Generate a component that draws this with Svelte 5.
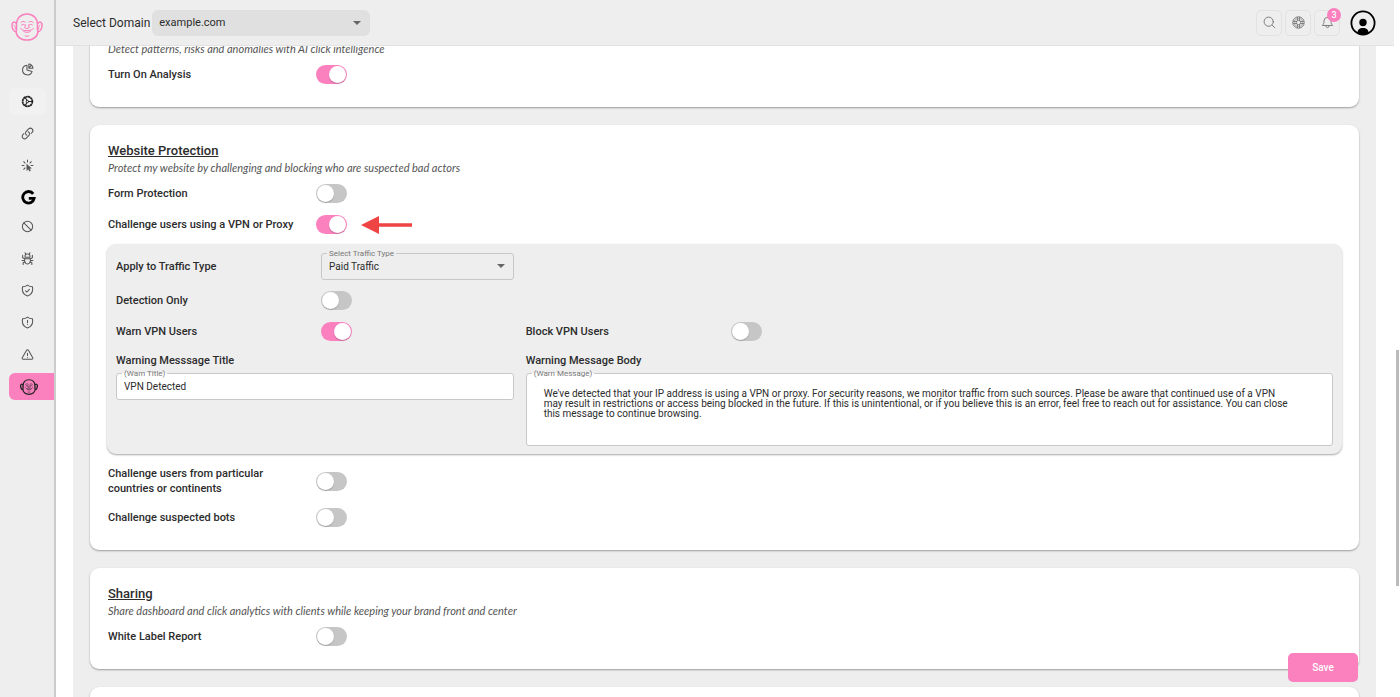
<script lang="ts">
	let domain = $state('example.com');
	let trafficType = $state('Paid Traffic');
	let warnTitle = $state('VPN Detected');
	let warnMessage = $state(
		"We've detected that your IP address is using a VPN or proxy. For security reasons, we monitor traffic from such sources. Please be aware that continued use of a VPN may result in restrictions or access being blocked in the future. If this is unintentional, or if you believe this is an error, feel free to reach out for assistance. You can close this message to continue browsing."
	);

	let settings = $state({
		analysis: true,
		form: false,
		vpn: true,
		detection: false,
		warn: true,
		block: false,
		countries: false,
		bots: false,
		whiteLabel: false
	});

	const navItems = [
		{ id: 'reports', label: 'Reports' },
		{ id: 'settings', label: 'Settings' },
		{ id: 'links', label: 'Links' },
		{ id: 'clicks', label: 'Clicks' },
		{ id: 'google', label: 'Google' },
		{ id: 'blocked', label: 'Blocked' },
		{ id: 'bots', label: 'Bots' },
		{ id: 'protected', label: 'Protected' },
		{ id: 'risks', label: 'Risks' },
		{ id: 'alerts', label: 'Alerts' },
		{ id: 'monk', label: 'Protection settings' }
	];
</script>

{#snippet toggle(key, label)}
	<label for={key}>{label}</label>
	<input id={key} class="toggle" type="checkbox" bind:checked={settings[key]} />
{/snippet}

{#snippet monk()}
	<svg viewBox="0 0 32 28" fill="none" stroke="currentColor" stroke-width="1.5" stroke-linecap="round" stroke-linejoin="round">
		<path d="M5.500 12C5.500 5 10 1 16 1s10.500 4 10.500 11c0 2-.5 3 .2 5.500C27.500 23 22.500 27 16 27S4.500 23 5.300 17.500c.6-2.500.2-3.500.2-5.500z" />
		<path d="M5.300 10.500C3 7.500.5 9.500 1 13c.4 3 1.500 5.500 4 5.800M26.700 10.500c2.300-3 4.800-1 4.300 2.500-.4 3-1.500 5.500-4 5.800" />
		<path d="M3 12c1 .5 1.500 2 1.300 4M29 12c-1 .5-1.500 2-1.300 4" stroke-width="1" />
		<path d="M10 9.200c1.300-1 3-1 4.300-.2M22 9.200c-1.300-1-3-1-4.300-.2M10.500 12c1-.8 2.500-.8 3.500 0M21.500 12c-1-.8-2.500-.8-3.500 0M14.500 12l-.8 2.700c.8 1 3.800 1 4.600 0l-.8-2.700M9.500 15.500c1.500 3 11.500 3 13 0M12.500 18.300c2 1.500 5 1.500 7 0M14 22.800c1.200.8 2.800.8 4 0" stroke-width="1" />
	</svg>
{/snippet}

{#snippet navIcon(id)}
	{#if id === 'monk'}
		{@render monk()}
	{:else if id === 'google'}
		<svg class="g" viewBox="0 0 24 24" fill="none" stroke="currentColor" stroke-width="4.500">
			<path d="M19.500 6.300A9.200 9.200 0 1 0 21 13.500H12.500" />
		</svg>
	{:else}
		<svg viewBox="0 0 24 24" fill="none" stroke="currentColor" stroke-width="1.900" stroke-linecap="round" stroke-linejoin="round">
			{#if id === 'reports'}
				<path d="M11 4a9 9 0 1 0 9.500 11.500L11 13z" />
				<path d="M14.500 2v7.500H22A7.500 7.500 0 0 0 14.500 2zM14.500 9.500L19 4.500" />
			{:else if id === 'settings'}
				<circle cx="12" cy="12" r="9" stroke-width="3.200" stroke-dasharray="4.200 .51" stroke-linecap="butt" />
				<circle cx="12" cy="12" r="2.200" stroke-width="1.800" />
				<path d="M14.500 12H20M10.700 9.800L8 5M10.700 14.200L8 19" stroke-width="2" />
			{:else if id === 'links'}
				<path d="M13.200 8.700a4.500 4.500 0 0 1 1.200 7.200l-4.500 4.500a4.500 4.500 0 0 1-6.400-6.400l1.800-1.700M10.800 15.300a4.500 4.500 0 0 1-1.200-7.200l4.500-4.500a4.500 4.500 0 0 1 6.400 6.400l-1.800 1.700" />
			{:else if id === 'clicks'}
				<path d="M12 2v3.500M5 5l2.500 2.500M19 5l-2.500 2.500M2 12h3.500M18.500 12H22M5 19l2.500-2.500" />
				<path d="M11 10l8 7-3.500.5 2 4-1.800.9-2-4-2.700 2.300z" fill="currentColor" stroke-width="1" />
			{:else if id === 'blocked'}
				<circle cx="12" cy="12" r="9.500" />
				<path d="M5.300 5.300l13.400 13.400" />
			{:else if id === 'bots'}
				<path d="M7.500 9.500V7a4.500 3.500 0 0 1 9 0v2.500zM9 4L7.500 1.500M15 4l1.500-2.500" />
				<path d="M7 12.500h10c1.500 5.500-1 9.500-5 9.500s-6.500-4-5-9.500z" />
				<path d="M7 12.500L3 10.500V6M17 12.500l4-2V6M6.500 15.500H2M17.500 15.500H22M7.500 18.500L4 19.500V23M16.500 18.500l3.500 1V23" />
			{:else if id === 'protected' || id === 'risks'}
				<path d="M12 2c2.500 2 5.500 3 9 3 1.500 7-.5 14-9 17C3.500 19 1.500 12 3 5c3.500 0 6.500-1 9-3z" />
				{#if id === 'protected'}
					<path d="M8.500 12.500l2.500 2.300 4.500-5" />
				{:else}
					<path d="M12 8v4.500M12 15.500v.3" />
				{/if}
			{:else if id === 'alerts'}
				<path d="M10.300 4.200a2 2 0 0 1 3.400 0l8 13.600a2 2 0 0 1-1.700 3H4a2 2 0 0 1-1.700-3zM12 9.500v4.500M12 17v.2" />
			{/if}
		</svg>
	{/if}
{/snippet}

<div class="app">
	<aside>
		<a class="logo" href="#home" aria-label="Home">{@render monk()}</a>
		<nav>
			{#each navItems as item}
				<a class="nav-item {item.id}" href="#{item.id}" aria-label={item.label}>
					{@render navIcon(item.id)}
				</a>
			{/each}
		</nav>
	</aside>

	<div class="main">
		<header>
			<label for="domain">Select Domain</label>
			<div class="select-wrap domain">
				<select id="domain" bind:value={domain}>
					<option>example.com</option>
				</select>
				<svg class="caret" viewBox="0 0 8 4"><path d="M0 0h8L4 4z" fill="currentColor" /></svg>
			</div>
			<div class="actions">
				<button aria-label="Search">
					<svg viewBox="0 0 24 24" fill="none" stroke="currentColor" stroke-width="1.700" stroke-linecap="round">
						<circle cx="10.500" cy="10.500" r="8.500" />
						<path d="M17 17l5 5" />
					</svg>
				</button>
				<button aria-label="Help">
					<svg viewBox="0 0 24 24" fill="none" stroke="currentColor" stroke-width="1.800">
						<circle cx="12" cy="12" r="10.500" />
						<circle cx="12" cy="12" r="4" />
						<path d="M10 2v6.500M14 2v6.500M10 15.500V22M14 15.500V22M2 10h6.500M2 14h6.500M15.500 10H22M15.500 14H22" />
						<circle cx="12" cy="12" r="7.500" stroke-width="1" />
					</svg>
				</button>
				<button aria-label="Notifications">
					<svg viewBox="0 0 24 24" fill="none" stroke="currentColor" stroke-width="1.700" stroke-linecap="round" stroke-linejoin="round">
						<path d="M12 2.500a6.500 6.500 0 0 0-6.500 6.500c0 5-1 6.500-3 8.500h19c-2-2-3-3.500-3-8.500A6.500 6.500 0 0 0 12 2.500zM9 18a3 3.500 0 0 0 6 0" />
					</svg>
					<span class="badge">3</span>
				</button>
				<button class="avatar" aria-label="Account">
					<svg viewBox="0 0 26 26">
						<circle cx="13" cy="13" r="11.600" fill="none" stroke="#000" stroke-width="1.800" />
						<circle cx="13" cy="12.500" r="3.700" />
						<path d="M7.500 23c0-3.500 2-5 5.500-5s5.500 1.500 5.500 5c-3.500 2-7.500 2-11 0z" />
					</svg>
				</button>
			</div>
		</header>

		<main>
			<div class="page">
				<section class="card scrolled">
					<p>Detect patterns, risks and anomalies with AI click intelligence</p>
					<div class="row">{@render toggle('analysis', 'Turn On Analysis')}</div>
				</section>

				<section class="card">
					<h2>Website Protection</h2>
					<p>Protect my website by challenging and blocking who are suspected bad actors</p>
					<div class="row">{@render toggle('form', 'Form Protection')}</div>
					<div class="row">
						{@render toggle('vpn', 'Challenge users using a VPN or Proxy')}
						<svg class="arrow" viewBox="0 0 51 18">
							<path d="M0 9L18 0v7.200h33v3.600H18V18z" fill="#ee4444" />
						</svg>
					</div>

					<div class="panel">
						<div class="row traffic">
							<label for="traffic">Apply to Traffic Type</label>
							<div class="field select-wrap">
								<span class="legend">Select Traffic Type</span>
								<select id="traffic" bind:value={trafficType}>
									<option>Paid Traffic</option>
								</select>
								<svg class="caret" viewBox="0 0 8 4"><path d="M0 0h8L4 4z" fill="currentColor" /></svg>
							</div>
						</div>
						<div class="row full">{@render toggle('detection', 'Detection Only')}</div>
						<div class="row">{@render toggle('warn', 'Warn VPN Users')}</div>
						<div class="row wide">{@render toggle('block', 'Block VPN Users')}</div>
						<div class="message">
							<label for="warn-title">Warning Messsage Title</label>
							<div class="field">
								<span class="legend white">(Warn Title)</span>
								<input id="warn-title" type="text" bind:value={warnTitle} />
							</div>
						</div>
						<div class="message wide">
							<label for="warn-message">Warning Message Body</label>
							<div class="field">
								<span class="legend white">(Warn Message)</span>
								<textarea id="warn-message" bind:value={warnMessage}></textarea>
							</div>
						</div>
					</div>

					<div class="row tall">
						{@render toggle('countries', 'Challenge users from particular countries or continents')}
					</div>
					<div class="row">{@render toggle('bots', 'Challenge suspected bots')}</div>
				</section>

				<section class="card">
					<h2>Sharing</h2>
					<p>Share dashboard and click analytics with clients while keeping your brand front and center</p>
					<div class="row">{@render toggle('whiteLabel', 'White Label Report')}</div>
				</section>

				<section class="card next"></section>
			</div>
		</main>
		<div class="scrollbar"></div>
		<button class="save">Save</button>
	</div>
</div>

<style>
	:global(body) {
		background: #fff;
	}

	.app {
		display: flex;
		height: 100vh;
		overflow: hidden;
		font-family: Roboto, 'Liberation Sans', sans-serif;
		font-size: 11px;
		color: #2c2c2c;
	}

	.app :global(*) {
		box-sizing: border-box;
	}

	button,
	input,
	select,
	textarea {
		font: inherit;
		color: inherit;
		margin: 0;
	}

	svg {
		display: block;
	}

	aside {
		flex: none;
		width: 56px;
		background: #eee;
		border-right: 2px solid #ccc;
	}

	.logo {
		display: flex;
		justify-content: center;
		padding-top: 13px;
		height: 56px;
		color: #fa80be;
	}

	.logo svg {
		width: 32px;
		height: 28px;
	}

	nav {
		display: flex;
		flex-direction: column;
		gap: 5px;
	}

	.nav-item {
		display: flex;
		align-items: center;
		justify-content: center;
		height: 27px;
		margin: 0 8px 0 9px;
		border-radius: 6px;
		color: #555;
	}

	.nav-item svg {
		width: 13px;
		height: 13px;
	}

	.nav-item.settings {
		background: #f1f1f1;
		color: #222;
	}

	.nav-item.google {
		height: 24px;
		padding: 2px 0 0 2px;
		color: #000;
	}

	.nav-item svg.g {
		width: 15px;
		height: 15px;
	}

	.nav-item.monk {
		margin-right: 0;
		padding-right: 6px;
		border-radius: 6px 0 0 6px;
		background: #fa80be;
		color: #222;
	}

	.nav-item.monk svg {
		width: 18px;
		height: 16px;
		stroke-width: 2;
	}

	.main {
		position: relative;
		flex: 1;
		min-width: 0;
		display: flex;
		flex-direction: column;
	}

	header {
		flex: none;
		display: flex;
		align-items: center;
		gap: 2px;
		height: 46px;
		margin-right: 6px;
		padding: 0 18px 0 17px;
		background: #eee;
		border-bottom: 1px solid #e2e2e2;
	}

	header label {
		font-size: 12px;
	}

	.select-wrap {
		position: relative;
	}

	.domain {
		width: 218px;
	}

	select {
		display: block;
		width: 100%;
		height: 26px;
		padding: 0 7px;
		border: 0;
		border-radius: 6px;
		background: #e0e0e0;
		appearance: none;
		font-size: 10px;
	}

	.domain select {
		font-size: 11px;
		line-height: 16px;
	}

	.caret {
		position: absolute;
		top: 11px;
		right: 9px;
		width: 8px;
		height: 4px;
		color: #666;
		pointer-events: none;
	}

	.actions {
		display: flex;
		align-items: center;
		gap: 3px;
		margin-left: auto;
	}

	.actions button {
		position: relative;
		display: flex;
		align-items: center;
		justify-content: center;
		width: 26px;
		height: 26px;
		padding: 0;
		border: 1px solid #e2e2e2;
		border-radius: 5px;
		background: none;
		color: #777;
	}

	.actions button svg {
		width: 13px;
		height: 13px;
	}

	.actions .avatar {
		margin-left: 7px;
		border: 0;
		color: #000;
	}

	.actions .avatar svg {
		width: 26px;
		height: 26px;
	}

	.badge {
		position: absolute;
		top: -3px;
		right: -2px;
		width: 14px;
		height: 14px;
		border-radius: 50%;
		background: #fa80be;
		color: #fff;
		font-size: 9px;
		font-weight: 500;
		line-height: 14px;
		text-align: center;
	}

	main {
		flex: 1;
		min-height: 0;
		overflow: hidden;
		padding: 0 24px 0 17px;
	}

	.page {
		display: flex;
		flex-direction: column;
		gap: 18px;
		min-height: 100%;
		padding: 0 17px;
		background: #eee;
	}

	.card {
		padding: 18px 17px 17px;
		border-radius: 9px;
		background: #fff;
		box-shadow: 0 1px 2px rgba(0, 0, 0, 0.35);
	}

	/* the page rests part way down, with the top of this card under the header */
	.card.scrolled {
		margin-top: -6px;
		padding-top: 0;
		border-radius: 0 0 9px 9px;
	}

	.card.next {
		height: 100px;
	}

	h2 {
		margin: 0;
		font-size: 13px;
		font-weight: 500;
		line-height: 16px;
		text-decoration: underline;
	}

	p {
		margin: 0 0 2px;
		font-family: Lato, Roboto, sans-serif;
		font-size: 11px;
		font-style: italic;
		line-height: 17px;
		color: #555;
	}

	h2,
	p {
		padding-left: 1px;
	}

	.row {
		display: grid;
		grid-template-columns: 196px auto 1fr;
		column-gap: 12px;
		align-items: center;
		min-height: 31px;
		line-height: 15px;
		padding-left: 1px;
	}

	.row label,
	.message label {
		font-weight: 500;
	}

	.row.tall {
		min-height: 42px;
	}

	.toggle {
		display: block;
		width: 31px;
		height: 19px;
		padding: 1px;
		border-radius: 10px;
		background: #c6c6c6;
		appearance: none;
	}

	.toggle::before {
		content: '';
		display: block;
		width: 17px;
		height: 17px;
		border-radius: 50%;
		background: #fff;
		box-shadow: 0 1px 1px rgba(0, 0, 0, 0.2);
	}

	.toggle:checked {
		background: #fa80be;
	}

	.toggle:checked::before {
		margin-left: auto;
	}

	.arrow {
		width: 51px;
		height: 18px;
		margin-left: 2px;
	}

	.panel {
		display: grid;
		grid-template-columns: repeat(3, minmax(0, 1fr));
		column-gap: 12px;
		margin: 4px 0 6px;
		padding: 9px 9px 8px;
		border-radius: 9px;
		background: #eee;
		box-shadow: 0 1px 2px rgba(0, 0, 0, 0.35);
	}

	.panel .row {
		grid-template-columns: 192px auto;
		column-gap: 13px;
		justify-content: start;
		padding-left: 0;
	}

	.panel .row.traffic {
		grid-template-columns: 192px 1fr;
		justify-content: stretch;
		min-height: 27px;
		margin-bottom: 5px;
	}

	.panel .full {
		grid-column: 1 / -1;
	}

	.traffic {
		grid-column: 1;
	}

	.panel .wide {
		grid-column: span 2;
	}

	.message {
		padding-top: 6px;
	}

	.message label {
		display: block;
		margin-bottom: 4px;
		line-height: 16px;
	}

	.field {
		position: relative;
	}

	.legend {
		position: absolute;
		top: -4px;
		left: 6px;
		padding: 0 2px;
		background: #eee;
		color: #777;
		font-size: 8px;
		line-height: 10px;
	}

	.legend.white {
		background: linear-gradient(#eee 40%, #fff 40%);
	}

	.field select,
	.field input,
	.field textarea {
		display: block;
		width: 100%;
		height: 27px;
		padding: 0 7px;
		border: 1px solid #c8c8c8;
		border-radius: 3px;
		background: #fff;
		font-size: 10px;
	}

	.field select {
		background: #eee;
	}

	.field textarea {
		height: 73px;
		padding: 15px 36px 15px 17px;
		line-height: 10px;
		resize: none;
	}

	.scrollbar {
		position: absolute;
		top: 350px;
		right: 1px;
		width: 3px;
		height: 236px;
		background: #bbb;
	}

	.save {
		position: absolute;
		right: 42px;
		bottom: 15px;
		width: 70px;
		height: 29px;
		padding: 0;
		border: 0;
		border-radius: 5px;
		background: #fa80be;
		color: #fff;
		font-size: 10px;
		font-weight: 500;
	}
</style>
